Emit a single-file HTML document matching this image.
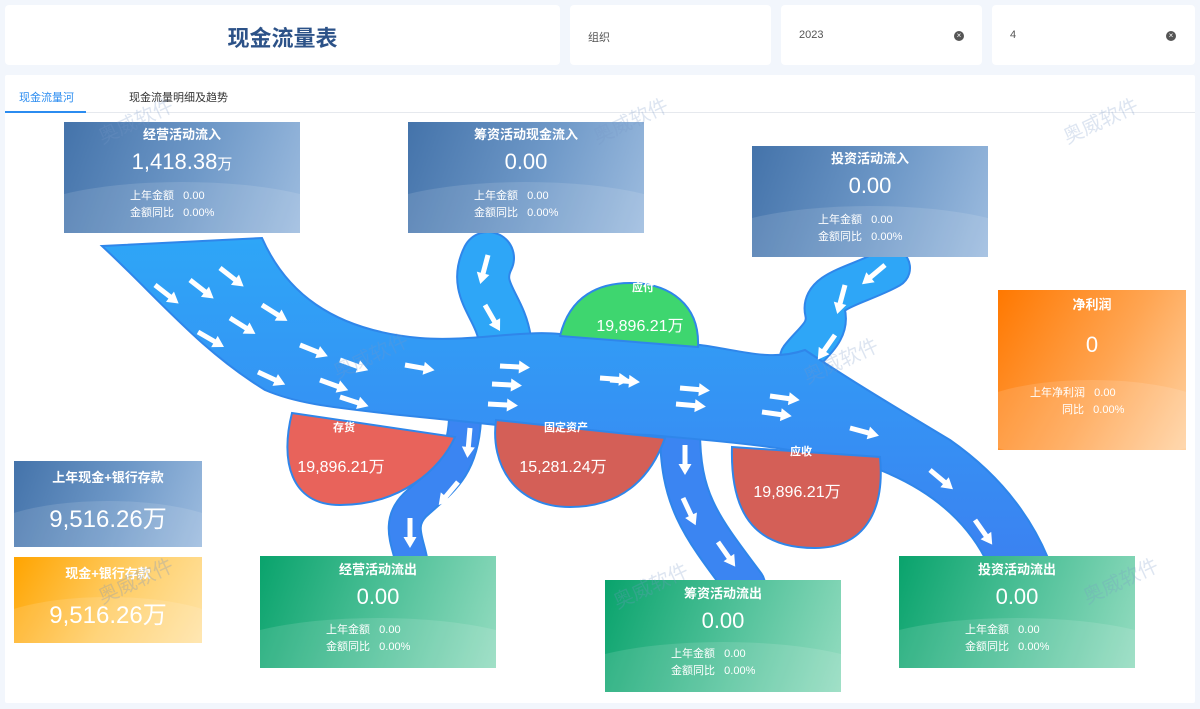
<!DOCTYPE html>
<html><head><meta charset="utf-8">
<style>
*{margin:0;padding:0;box-sizing:border-box}
body{width:1200px;height:709px;background:#f2f6fc;font-family:"Liberation Sans","Noto Sans CJK SC",sans-serif;position:relative;overflow:hidden}
.box{position:absolute;background:#fff;border-radius:4px}
.card{position:absolute;color:#fff;overflow:hidden;text-align:center}
.card .t{position:absolute;left:0;right:0;font-size:13px;font-weight:bold}
.card .v{position:absolute;left:0;right:0;font-size:22px}
.card .s{position:absolute;font-size:11px;line-height:17px;text-align:left}
.wave{position:absolute;left:-20%;width:140%;height:80px;border-radius:50%;background:rgba(255,255,255,.12)}
.blue{background:linear-gradient(110deg,#4473aa 0%,#6f99c8 55%,#9dbcdf 100%)}
.green{background:linear-gradient(110deg,#09a36c 0%,#55c39c 55%,#94dcc0 100%)}
.orange{background:linear-gradient(120deg,#ff7800 0%,#ffa552 55%,#ffd3a4 100%)}
.yellow{background:linear-gradient(120deg,#ffa400 0%,#ffcf6a 55%,#ffe4a8 100%)}
.x{position:absolute;width:10px;height:10px;border-radius:50%;background:#555;color:#fff;font-size:8px;line-height:10px;text-align:center}
</style></head><body>
<div class="box" style="left:5px;top:5px;width:555px;height:60px"><div style="position:absolute;left:0;right:0;top:16px;text-align:center;font-size:22px;font-weight:bold;color:#2c5288">现金流量表</div></div>
<div class="box" style="left:570px;top:5px;width:201px;height:60px"><span style="position:absolute;left:18px;top:24px;font-size:11px;color:#555">组织</span></div>
<div class="box" style="left:781px;top:5px;width:201px;height:60px"><span style="position:absolute;left:18px;top:24px;font-size:11px;color:#555">2023</span><div class="x" style="left:173px;top:26px">×</div></div>
<div class="box" style="left:992px;top:5px;width:203px;height:60px"><span style="position:absolute;left:18px;top:24px;font-size:11px;color:#555">4</span><div class="x" style="left:174px;top:26px">×</div></div>
<div class="box" style="left:5px;top:75px;width:1190px;height:628px;border-radius:2px">
<div style="position:absolute;left:0;right:0;top:37px;border-top:1px solid #e6e9ee"></div>
<div style="position:absolute;left:0;top:36px;width:81px;height:2px;background:#2b8cf0"></div>
<span style="position:absolute;left:14px;top:14px;font-size:11px;color:#2b8cf0">现金流量河</span>
<span style="position:absolute;left:124px;top:14px;font-size:11px;color:#333">现金流量明细及趋势</span>
</div>

<svg style="position:absolute;left:0;top:0" width="1200" height="709">
<defs>
<linearGradient id="rv" x1="0" y1="0" x2="0" y2="1"><stop offset="0" stop-color="#2ea6f7"/><stop offset="1" stop-color="#3b82f1"/></linearGradient>
<path id="ar" d="M0,-2.5 L19,-2.5 L19,-6.5 L30,0 L19,6.5 L19,2.5 L0,2.5Z" fill="#fff"/>
</defs>
<g fill="none" stroke-linecap="round">
<path d="M488,258 C472,290 500,305 505,340" stroke="#2f86ea" stroke-width="54"/>
<path d="M488,258 C472,290 500,305 505,340" stroke="#2ea6f7" stroke-width="50"/>
<path d="M890,268 C860,285 820,290 825,312 C830,332 812,342 800,358" stroke="#2f86ea" stroke-width="42"/>
<path d="M890,268 C860,285 820,290 825,312 C830,332 812,342 800,358" stroke="#2ea6f7" stroke-width="38"/>
<path d="M465,420 C462,470 440,482 415,505 C395,525 410,545 412,565" stroke="#2f86ea" stroke-width="34"/>
<path d="M465,420 C462,470 440,482 415,505 C395,525 410,545 412,565" stroke="#3b85f2" stroke-width="30"/>
<path d="M680,430 C680,500 700,525 745,585" stroke="#2f86ea" stroke-width="42"/>
<path d="M680,430 C680,500 700,525 745,585" stroke="#3b85f2" stroke-width="38"/>
</g>
<g stroke="#2f86ea" stroke-width="2" fill="url(#rv)">
<path d="M102,246 L262,238 C285,290 330,330 420,338 C470,342 520,330 560,334 L700,345 C740,350 770,362 805,350 C850,380 900,410 950,440 C1000,475 1030,515 1048,558 L985,558 C965,520 930,490 880,470 C800,445 700,440 650,435 L560,432 C500,425 450,420 400,415 C340,408 300,405 265,390 C200,350 160,300 102,246 Z"/>
</g>
<path d="M560,336 C570,295 600,283 630,283 C670,283 700,305 698,347 Z" fill="#3ed66f" stroke="#2f86ea" stroke-width="2"/>
<path d="M292,413 L455,437 C440,470 400,505 340,505 C290,505 280,460 292,413 Z" fill="#e8635b" stroke="#2f86ea" stroke-width="2"/>
<path d="M496,420 L665,438 C650,480 620,507 570,507 C515,507 490,465 496,420 Z" fill="#d45f57" stroke="#2f86ea" stroke-width="2"/>
<path d="M732,447 L880,457 C885,510 865,548 815,548 C760,548 730,520 732,447 Z" fill="#d45f57" stroke="#2f86ea" stroke-width="2"/>
<g>
<use href="#ar" transform="translate(155,285) rotate(38)"/>
<use href="#ar" transform="translate(190,280) rotate(38)"/>
<use href="#ar" transform="translate(220,268) rotate(38)"/>
<use href="#ar" transform="translate(262,305) rotate(32)"/>
<use href="#ar" transform="translate(230,318) rotate(32)"/>
<use href="#ar" transform="translate(198,332) rotate(30)"/>
<use href="#ar" transform="translate(258,372) rotate(25)"/>
<use href="#ar" transform="translate(300,345) rotate(22)"/>
<use href="#ar" transform="translate(340,360) rotate(20)"/>
<use href="#ar" transform="translate(320,380) rotate(20)"/>
<use href="#ar" transform="translate(340,397) rotate(18)"/>
<use href="#ar" transform="translate(405,365) rotate(10)"/>
<use href="#ar" transform="translate(500,366) rotate(3)"/>
<use href="#ar" transform="translate(492,384) rotate(3)"/>
<use href="#ar" transform="translate(488,404) rotate(3)"/>
<use href="#ar" transform="translate(600,378) rotate(4)"/>
<use href="#ar" transform="translate(610,380) rotate(4)"/>
<use href="#ar" transform="translate(680,388) rotate(5)"/>
<use href="#ar" transform="translate(676,404) rotate(5)"/>
<use href="#ar" transform="translate(770,396) rotate(8)"/>
<use href="#ar" transform="translate(762,412) rotate(8)"/>
<use href="#ar" transform="translate(850,428) rotate(15)"/>
<use href="#ar" transform="translate(930,470) rotate(40)"/>
<use href="#ar" transform="translate(975,520) rotate(55)"/>
<use href="#ar" transform="translate(488,255) rotate(105)"/>
<use href="#ar" transform="translate(485,305) rotate(60)"/>
<use href="#ar" transform="translate(885,265) rotate(140)"/>
<use href="#ar" transform="translate(845,285) rotate(105)"/>
<use href="#ar" transform="translate(835,335) rotate(125)"/>
<use href="#ar" transform="translate(470,428) rotate(95)"/>
<use href="#ar" transform="translate(458,482) rotate(130)"/>
<use href="#ar" transform="translate(410,518) rotate(90)"/>
<use href="#ar" transform="translate(685,445) rotate(90)"/>
<use href="#ar" transform="translate(683,498) rotate(65)"/>
<use href="#ar" transform="translate(718,542) rotate(55)"/>
</g>
<g fill="#fff" font-family="Liberation Sans, Noto Sans CJK SC, sans-serif" text-anchor="middle">
<text x="643" y="291" font-size="11" font-weight="bold">应付</text>
<text x="640" y="331" font-size="16">19,896.21万</text>
<text x="344" y="431" font-size="11" font-weight="bold">存货</text>
<text x="341" y="472" font-size="16">19,896.21万</text>
<text x="566" y="431" font-size="11" font-weight="bold">固定资产</text>
<text x="563" y="472" font-size="16">15,281.24万</text>
<text x="801" y="455" font-size="11" font-weight="bold">应收</text>
<text x="797" y="497" font-size="16">19,896.21万</text>
</g>
</svg>

<div class="card blue" style="left:64px;top:122px;width:236px;height:111px"><div class="wave" style="top:60px"></div><div class="t" style="top:2px">经营活动流入</div><div class="v" style="top:27px">1,418.38<span style="font-size:15px">万</span></div><div class="s" style="left:66px;top:66px">上年金额&nbsp;&nbsp;&nbsp;0.00<br>金额同比&nbsp;&nbsp;&nbsp;0.00%</div></div>
<div class="card blue" style="left:408px;top:122px;width:236px;height:111px"><div class="wave" style="top:60px"></div><div class="t" style="top:2px">筹资活动现金流入</div><div class="v" style="top:27px">0.00</div><div class="s" style="left:66px;top:66px">上年金额&nbsp;&nbsp;&nbsp;0.00<br>金额同比&nbsp;&nbsp;&nbsp;0.00%</div></div>
<div class="card blue" style="left:752px;top:146px;width:236px;height:111px"><div class="wave" style="top:60px"></div><div class="t" style="top:2px">投资活动流入</div><div class="v" style="top:27px">0.00</div><div class="s" style="left:66px;top:66px">上年金额&nbsp;&nbsp;&nbsp;0.00<br>金额同比&nbsp;&nbsp;&nbsp;0.00%</div></div>
<div class="card orange" style="left:998px;top:290px;width:188px;height:160px"><div class="wave" style="top:90px"></div><div class="t" style="top:4px">净利润</div><div class="v" style="top:42px">0</div><div class="s" style="left:32px;top:95px">上年净利润&nbsp;&nbsp;&nbsp;0.00<br><span style="padding-left:32px">同比</span>&nbsp;&nbsp;&nbsp;0.00%</div></div>
<div class="card blue" style="left:14px;top:461px;width:188px;height:86px"><div class="wave" style="top:40px"></div><div class="t" style="top:6px">上年现金+银行存款</div><div class="v" style="top:38px;font-size:24px">9,516.26万</div></div>
<div class="card yellow" style="left:14px;top:557px;width:188px;height:86px"><div class="wave" style="top:40px"></div><div class="t" style="top:6px">现金+银行存款</div><div class="v" style="top:38px;font-size:24px">9,516.26万</div></div>
<div class="card green" style="left:260px;top:556px;width:236px;height:112px"><div class="wave" style="top:62px"></div><div class="t" style="top:3px">经营活动流出</div><div class="v" style="top:28px">0.00</div><div class="s" style="left:66px;top:66px">上年金额&nbsp;&nbsp;&nbsp;0.00<br>金额同比&nbsp;&nbsp;&nbsp;0.00%</div></div>
<div class="card green" style="left:605px;top:580px;width:236px;height:112px"><div class="wave" style="top:62px"></div><div class="t" style="top:3px">筹资活动流出</div><div class="v" style="top:28px">0.00</div><div class="s" style="left:66px;top:66px">上年金额&nbsp;&nbsp;&nbsp;0.00<br>金额同比&nbsp;&nbsp;&nbsp;0.00%</div></div>
<div class="card green" style="left:899px;top:556px;width:236px;height:112px"><div class="wave" style="top:62px"></div><div class="t" style="top:3px">投资活动流出</div><div class="v" style="top:28px">0.00</div><div class="s" style="left:66px;top:66px">上年金额&nbsp;&nbsp;&nbsp;0.00<br>金额同比&nbsp;&nbsp;&nbsp;0.00%</div></div>

<div style="position:absolute;left:95px;top:105px;transform:rotate(-25deg);font-size:20px;color:rgba(120,150,200,.25)">奥威软件</div>
<div style="position:absolute;left:590px;top:105px;transform:rotate(-25deg);font-size:20px;color:rgba(120,150,200,.25)">奥威软件</div>
<div style="position:absolute;left:1060px;top:105px;transform:rotate(-25deg);font-size:20px;color:rgba(120,150,200,.25)">奥威软件</div>
<div style="position:absolute;left:330px;top:340px;transform:rotate(-25deg);font-size:20px;color:rgba(120,150,200,.25)">奥威软件</div>
<div style="position:absolute;left:800px;top:345px;transform:rotate(-25deg);font-size:20px;color:rgba(120,150,200,.25)">奥威软件</div>
<div style="position:absolute;left:95px;top:565px;transform:rotate(-25deg);font-size:20px;color:rgba(120,150,200,.3)">奥威软件</div>
<div style="position:absolute;left:610px;top:570px;transform:rotate(-25deg);font-size:20px;color:rgba(120,150,200,.25)">奥威软件</div>
<div style="position:absolute;left:1080px;top:565px;transform:rotate(-25deg);font-size:20px;color:rgba(120,150,200,.25)">奥威软件</div>
</body></html>
